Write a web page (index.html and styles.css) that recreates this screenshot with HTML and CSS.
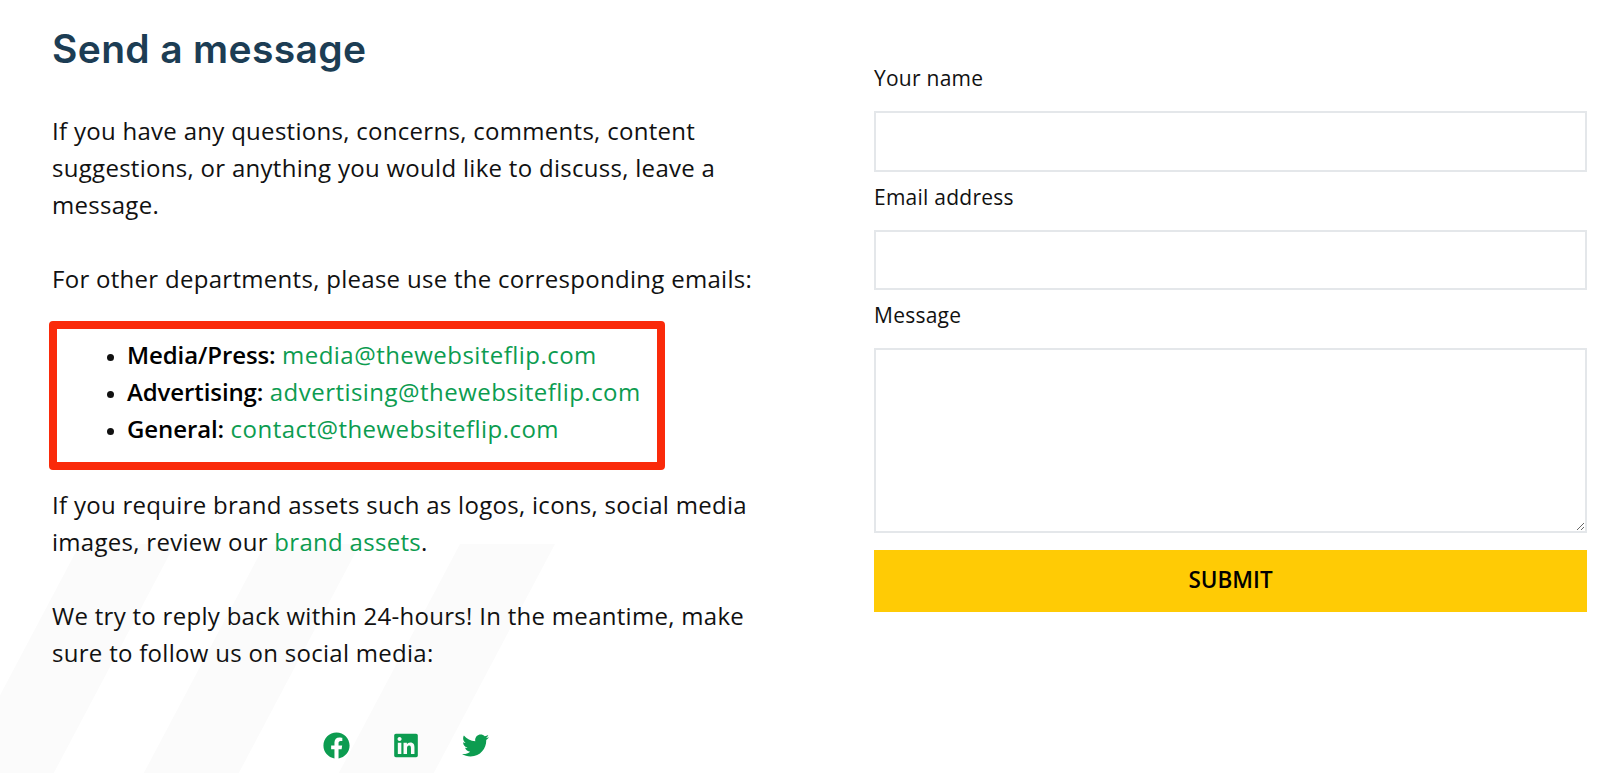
FILE: index.html
```html
<!DOCTYPE html>
<html lang="en">
<head>
<meta charset="utf-8">
<title>Send a message</title>
<link rel="stylesheet" href="styles.css">
</head>
<body>
<svg class="stripes" viewBox="0 0 600 240" width="600" height="240" aria-hidden="true">
  <polygon points="80,0 175,0 48,240 -47,240"/>
  <polygon points="265,0 360,0 233,240 138,240"/>
  <polygon points="460,0 555,0 428,240 333,240"/>
</svg>
<main class="page">
  <section class="info">
    <h1 class="title">Send a message</h1>
    <p class="para">If you have any questions, concerns, comments, content suggestions, or anything you would like to discuss, leave a message.</p>
    <p class="para">For other departments, please use the corresponding emails:</p>
    <div class="callout">
      <ul class="emails">
        <li><strong>Media/Press:</strong> <a href="#">media@thewebsiteflip.com</a></li>
        <li><strong>Advertising:</strong> <a href="#">advertising@thewebsiteflip.com</a></li>
        <li><strong>General:</strong> <a href="#">contact@thewebsiteflip.com</a></li>
      </ul>
    </div>
    <p class="para">If you require brand assets such as logos, icons, social media images, review our <a href="#">brand assets</a>.</p>
    <p class="para">We try to reply back within 24-hours! In the meantime, make sure to follow us on social media:</p>
    <div class="social">
      <a href="#" aria-label="Facebook"><svg viewBox="0 0 512 512" width="27" height="27"><path d="M504 256C504 119 393 8 256 8S8 119 8 256c0 123.78 90.69 226.38 209.25 245V327.69h-63V256h63v-54.64c0-62.15 37-96.48 93.67-96.48 27.14 0 55.52 4.84 55.52 4.84v61h-31.28c-30.8 0-40.41 19.12-40.41 38.73V256h68.78l-11 71.69h-57.78V501C413.31 482.38 504 379.78 504 256z"/></svg></a>
      <a href="#" aria-label="LinkedIn"><svg viewBox="0 0 448 512" width="24" height="27"><path d="M416 32H31.9C14.3 32 0 46.5 0 64.3v383.4C0 465.5 14.3 480 31.9 480H416c17.6 0 32-14.5 32-32.3V64.3c0-17.8-14.4-32.3-32-32.3zM135.4 416H69V202.2h66.5V416zm-33.2-243c-21.3 0-38.5-17.3-38.5-38.5S80.9 96 102.2 96c21.2 0 38.5 17.3 38.5 38.5 0 21.3-17.2 38.5-38.5 38.5zm282.1 243h-66.4V312c0-24.8-.5-56.7-34.5-56.7-34.6 0-39.9 27-39.9 54.9V416h-66.4V202.2h63.7v29.2h.9c8.9-16.8 30.6-34.5 62.9-34.5 67.2 0 79.7 44.3 79.7 101.9V416z"/></svg></a>
      <a href="#" aria-label="Twitter"><svg viewBox="0 0 512 512" width="27" height="27"><path d="M459.37 151.716c.325 4.548.325 9.097.325 13.645 0 138.72-105.583 298.558-298.558 298.558-59.452 0-114.68-17.219-161.137-47.106 8.447.974 16.568 1.299 25.34 1.299 49.055 0 94.213-16.568 130.274-44.832-46.132-.975-84.792-31.188-98.112-72.772 6.498.974 12.995 1.624 19.818 1.624 9.421 0 18.843-1.3 27.614-3.573-48.081-9.747-84.143-51.98-84.143-102.985v-1.299c13.969 7.797 30.214 12.67 47.431 13.319-28.264-18.843-46.781-51.005-46.781-87.391 0-19.492 5.197-37.36 14.294-52.954 51.655 63.675 129.3 105.258 216.365 109.807-1.624-7.797-2.599-15.918-2.599-24.04 0-57.828 46.782-104.934 104.934-104.934 30.213 0 57.502 12.67 76.67 33.137 23.715-4.548 46.456-13.32 66.599-25.34-7.798 24.366-24.366 44.833-46.132 57.827 21.117-2.273 41.584-8.122 60.426-16.243-14.292 20.791-32.161 39.308-52.628 54.253z"/></svg></a>
    </div>
  </section>
  <form class="contact">
    <label class="field"><span class="label">Your name</span><input class="control" type="text"></label>
    <label class="field"><span class="label">Email address</span><input class="control" type="email"></label>
    <label class="field"><span class="label">Message</span><textarea class="control area"></textarea></label>
    <button class="submit" type="button">SUBMIT</button>
  </form>
</main>
</body>
</html>
```
FILE: styles.css
```css
* { box-sizing: border-box; }
html, body { margin: 0; height: 773px; overflow: hidden; background: #fff; }
body { position: relative; font-family: "Open Sans", "Noto Sans", sans-serif; color: #111; }
.stripes { position: absolute; left: 0; top: 544px; fill: #fbfbfb; }
.page { position: relative; display: flex; padding-left: 52px; }
.info { width: 708px; font-size: 24px; line-height: 37px; letter-spacing: 0.29px; }
.title { margin: 26px 0 40px; font-family: Inter, "Open Sans", sans-serif; font-size: 39px; line-height: 46px; font-weight: 600; letter-spacing: 0.35px; color: #1c3d54; }
.para { margin: 0 0 37px; }
.info a { color: #0c9c50; text-decoration: none; }
.callout { width: 616px; height: 149px; margin: -13px 0 16px -3px; padding: 7px 0 0; border: 8px solid #fa2a0a; border-radius: 4px; }
.emails { margin: 0; padding-left: 70px; }
.emails li::marker { font-size: 19px; }
.emails strong { font-weight: 600; color: #000; letter-spacing: -0.1px; }
.emails a { letter-spacing: 0.46px; }
.social { display: flex; justify-content: center; align-items: center; gap: 44px; margin-top: 61px; }
.social a { display: flex; fill: #0c9c50; }
.contact { width: 713px; margin-left: 114px; padding-top: 60px; display: flex; flex-direction: column; }
.field { display: flex; flex-direction: column; margin-bottom: 7px; }
.label { font-size: 21px; line-height: 37px; margin-bottom: 14px; letter-spacing: 0.25px; }
.control { display: block; width: 100%; height: 60.5px; border: 2px solid #e4e7ea; background: #fff; }
.area { height: 185px; }
.submit { height: 62.5px; margin-top: 9.5px; padding-bottom: 3px; border: 0; background: #ffcb05; font: 600 22.5px/1 "Open Sans", sans-serif; color: #000; }
```
